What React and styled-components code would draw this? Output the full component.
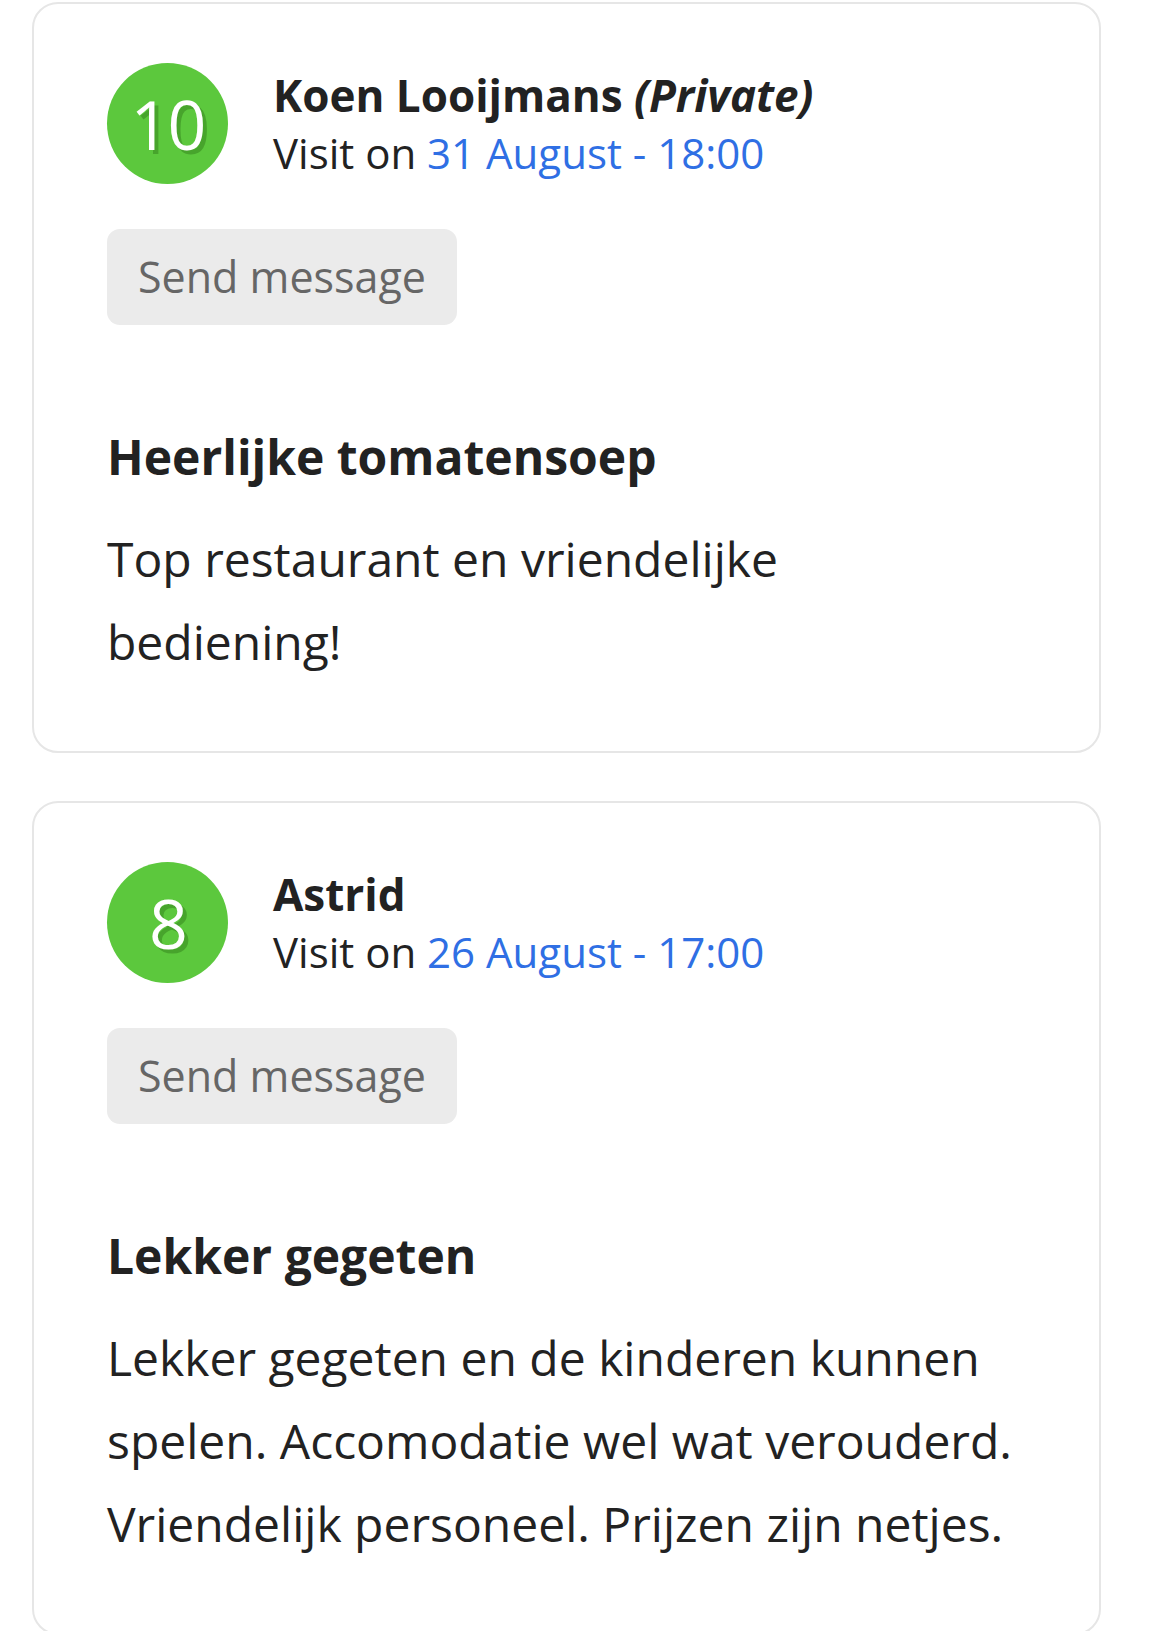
import React from "react";
import styled, { createGlobalStyle } from "styled-components";

const GlobalStyle = createGlobalStyle`
  html, body {
    margin: 0;
    padding: 0;
    background: #fff;
  }

  body {
    font-family: "Open Sans", "Noto Sans", sans-serif;
    color: #222;
  }
`;

const ReviewList = styled.div`
  display: flex;
  flex-direction: column;
  gap: 48px;
  padding: 2px 0 0 32px;
  width: 1069px;
`;

const ReviewCard = styled.div`
  border: 2px solid #e6e6e6;
  border-radius: 26px;
  padding: 59px 80px 68px 73px;
  background: #fff;
`;

const Header = styled.div`
  display: flex;
  align-items: center;
  gap: 45px;
`;

const Score = styled.div`
  width: 121px;
  height: 121px;
  border-radius: 50%;
  background: #5cc83d;
  color: #fff;
  display: flex;
  align-items: center;
  justify-content: center;
  font-size: 68px;
  letter-spacing: -2px;
  line-height: 1;
  text-shadow: 4px 4px 0 rgba(40, 110, 20, 0.4);
  flex-shrink: 0;
`;

const Meta = styled.div`
  display: flex;
  flex-direction: column;
  line-height: 57px;
`;

const Name = styled.div`
  font-size: 44px;
  font-weight: 700;
  color: #222;

  em {
    font-weight: 700;
    font-style: italic;
  }
`;

const Visit = styled.div`
  font-size: 42px;
  color: #222;

  span {
    color: #2f6fe4;
  }
`;

const MessageButton = styled.button`
  margin-top: 45px;
  align-self: flex-start;
  border: none;
  border-radius: 13px;
  background: #ebebeb;
  color: #666;
  font-family: inherit;
  font-size: 43px;
  line-height: 56px;
  padding: 20px 31px;
  cursor: pointer;
`;

const Title = styled.h2`
  margin: 102px 0 0;
  font-size: 48px;
  font-weight: 700;
  line-height: 60px;
  color: #222;
`;

const Body = styled.p`
  margin: 30px 0 0;
  font-size: 48px;
  line-height: 83px;
  color: #222;
`;

const reviews = [
  {
    score: 10,
    name: "Koen Looijmans",
    isPrivate: true,
    date: "31 August - 18:00",
    title: "Heerlijke tomatensoep",
    text: "Top restaurant en vriendelijke bediening!",
  },
  {
    score: 8,
    name: "Astrid",
    date: "26 August - 17:00",
    title: "Lekker gegeten",
    text: "Lekker gegeten en de kinderen kunnen spelen. Accomodatie wel wat verouderd. Vriendelijk personeel. Prijzen zijn netjes.",
  },
];

function Review({ review }) {
  return (
    <ReviewCard>
      <Header>
        <Score>{review.score}</Score>
        <Meta>
          <Name>
            {review.name} {review.isPrivate && <em>(Private)</em>}
          </Name>
          <Visit>
            Visit on <span>{review.date}</span>
          </Visit>
        </Meta>
      </Header>
      <MessageButton>Send message</MessageButton>
      <Title>{review.title}</Title>
      <Body>{review.text}</Body>
    </ReviewCard>
  );
}

export default function App() {
  return (
    <>
      <GlobalStyle />
      <ReviewList>
        {reviews.map((r) => (
          <Review key={r.name} review={r} />
        ))}
      </ReviewList>
    </>
  );
}
